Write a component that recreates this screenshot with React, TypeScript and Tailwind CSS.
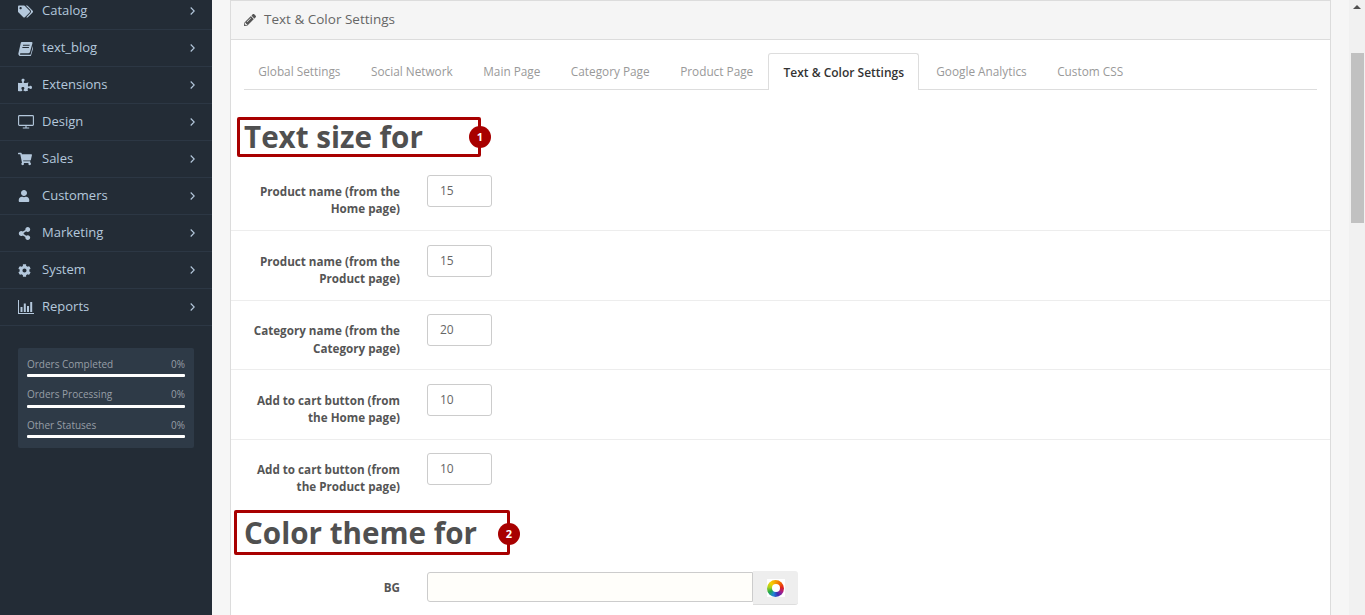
import React from 'react';
import { FaTags, FaPuzzlePiece, FaShoppingCart, FaUser, FaShareAlt, FaCog, FaPencilAlt } from 'react-icons/fa';

const IconBook = () => (
  <svg viewBox="0 0 16 16" className="w-[15px] h-[15px]" fill="currentColor">
    <path d="M4.2 1h10.3c.8 0 1.1.6.9 1.3l-2.6 9.4c-.2.7-.8 1.3-1.6 1.3H3c-.7 0-1 .5-.9 1 .1.4.5.7 1 .7h9.600c.4 0 .7-.3.800-.6l2.400-8.600c.5.200.7.700.5 1.300l-2.500 8.700c-.2.700-.9 1.200-1.600 1.200H2.800C1.500 16 .4 14.900.4 13.500c0-.3 0-.5.100-.7L2.900 2.500C3 1.700 3.500 1 4.200 1zm1.300 3l-.3 1h7l.3-1h-7zm-.7 2.500l-.3 1h7l.3-1h-7z" />
  </svg>
);

const IconDesktop = () => (
  <svg viewBox="0 0 16 14" className="w-[16px] h-[14px]" fill="none" stroke="currentColor" strokeWidth="1.1">
    <rect x="0.6" y="0.6" width="14.800" height="9.800" rx="0.8" />
    <path d="M8 10.500v2.400M4.800 13h6.400" />
  </svg>
);

const IconChart = () => (
  <svg viewBox="0 0 16 14" className="w-[16px] h-[14px]" fill="currentColor">
    <path d="M0 0h1v13h15v1H0z" />
    <path d="M2.500 7h2v5h-2zM5.800 3.500h2V12h-2zM9 6h2v6H9zM12.200 2h2v10h-2z" />
  </svg>
);

const IconAngle = () => (
  <svg viewBox="0 0 5 8" className="h-[8px] w-[5px]" fill="none" stroke="currentColor" strokeWidth="1.1">
    <path d="M0.700 0.500L4.200 4 0.700 7.500" />
  </svg>
);

const menu = [
  { label: 'Catalog', icon: <FaTags size={15} /> },
  { label: 'text_blog', icon: <IconBook /> },
  { label: 'Extensions', icon: <FaPuzzlePiece size={14} /> },
  { label: 'Design', icon: <IconDesktop /> },
  { label: 'Sales', icon: <FaShoppingCart size={14} /> },
  { label: 'Customers', icon: <FaUser size={12} /> },
  { label: 'Marketing', icon: <FaShareAlt size={13} /> },
  { label: 'System', icon: <FaCog size={13} /> },
  { label: 'Reports', icon: <IconChart /> },
];

const stats = ['Orders Completed', 'Orders Processing', 'Other Statuses'];

const tabs = [
  'Global Settings',
  'Social Network',
  'Main Page',
  'Category Page',
  'Product Page',
  'Text & Color Settings',
  'Google Analytics',
  'Custom CSS',
];

const sizes = [
  { line1: 'Product name (from the', line2: 'Home page)', value: '15' },
  { line1: 'Product name (from the', line2: 'Product page)', value: '15' },
  { line1: 'Category name (from the', line2: 'Category page)', value: '20' },
  { line1: 'Add to cart button (from', line2: 'the Home page)', value: '10' },
  { line1: 'Add to cart button (from', line2: 'the Product page)', value: '10' },
];

const Badge = ({ n, top }: { n: number; top: string }) => (
  <span className={`absolute right-[-13px] flex h-[22px] w-[22px] items-center justify-center rounded-full bg-[#a80000] text-[11px] font-bold text-white ${top}`}>
    {n}
  </span>
);

export default function App() {
  return (
    <div className="flex h-[615px] w-[1365px] overflow-hidden bg-[#f6f6f6] font-['Open_Sans',sans-serif] text-[12px] text-[#666]">
      {/* sidebar */}
      <aside className="h-full w-[212px] shrink-0 bg-[#232c36]">
        <ul className="mt-[-7px]">
          {menu.map((m) => (
            <li
              key={m.label}
              className="flex h-[37px] items-center border-b border-[#2c3744] pl-[18px] pr-[17px] text-[13px] text-[#b4c8dc]"
            >
              <span className="flex w-[24px] shrink-0 items-center">{m.icon}</span>
              <span className="flex-1">{m.label}</span>
              <IconAngle />
            </li>
          ))}
        </ul>
        <div className="ml-[18px] mt-[22px] h-[100px] w-[176px] rounded-[2px] bg-[#2e3a47] px-[9px] pt-[8px]">
          {stats.map((s) => (
            <div key={s} className="mb-[9.5px] last:mb-0">
              <div className="flex h-[16px] items-center justify-between text-[10px] text-[#979ea6]">
                <span>{s}</span>
                <span>0%</span>
              </div>
              <div className="mt-[2px] h-[3px] rounded-[1px] bg-white" />
            </div>
          ))}
        </div>
      </aside>

      {/* content */}
      <main className="ml-[18px] mr-[18px] h-full w-[1101px] shrink-0">
        <div className="h-full border-x border-t border-[#dcdcdc] bg-white">
          <div className="flex h-[39px] items-center border-b border-[#dcdcdc] bg-[#f5f5f5] pl-[13px] text-[13.5px] text-[#666]">
            <FaPencilAlt size={12} className="mr-[8px] text-[#555]" />
            <span className="mb-[2px]">Text &amp; Color Settings</span>
          </div>
          <div className="px-[13px] pt-[13px]">
            <ul className="flex h-[37px] w-[1073px] border-b border-[#ddd]">
              {tabs.map((t) =>
                t === 'Text & Color Settings' ? (
                  <li
                    key={t}
                    className="mb-[-1px] mr-[2px] flex h-[37px] items-center rounded-t-[3px] border border-b-0 border-[#ddd] bg-white px-[14px] pt-[1px] font-semibold text-[#333]"
                  >
                    {t}
                  </li>
                ) : (
                  <li key={t} className="flex h-[36px] items-center px-[15.25px] pt-[1px] text-[11.8px] text-[#999] first:pl-[14.25px]">
                    {t}
                  </li>
                ),
              )}
            </ul>
          </div>

          <div className="relative ml-[6px] mt-[27px] flex h-[40px] w-[244px] items-center rounded-[2px] border-[3px] border-[#a80000] pl-[4px]">
            <h2 className="text-[29.6px] font-bold leading-none text-[#505050]">Text size for</h2>
            <Badge n={1} top="top-[6px]" />
          </div>

          <div className="mt-[4px]">
            {sizes.map((r, i) => (
              <div
                key={i}
                className="flex h-[69.43px] border-t border-[#ededed] pt-[13.6px] first:border-t-transparent first:pt-[13px]"
              >
                <div className="w-[169px] shrink-0 pt-[8px] text-right text-[11.67px] font-bold leading-[17.14px] text-[#555]">
                  <div>{r.line1}</div>
                  <div>{r.line2}</div>
                </div>
                <div className="ml-[27px] flex h-[32px] w-[65px] items-center rounded-[3px] border border-[#ccc] bg-white pl-[12px] text-[#666]">
                  {r.value}
                </div>
              </div>
            ))}
          </div>

          <div className="relative ml-[3px] mt-[1.85px] flex h-[45px] w-[276px] items-center rounded-[2px] border-[3px] border-[#a80000] pl-[7px]">
            <h2 className="text-[29.6px] font-bold leading-none text-[#505050]">Color theme for</h2>
            <Badge n={2} top="top-[10px]" />
          </div>

          <div className="mt-[16px] flex h-[34px] items-start">
            <div className="w-[169px] shrink-0 pt-[8px] text-right text-[11.67px] font-bold leading-[17.14px] text-[#555]">BG</div>
            <div className="ml-[27px] mt-[1px] h-[30px] w-[326px] rounded-l-[3px] border border-[#ccc] bg-[#fffefa]" />
            <div className="flex h-[34px] w-[45px] items-center justify-center rounded-r-[3px] border-b border-[#ddd] bg-[#eee] pt-[2px]">
              <div className="flex h-[18px] w-[18px] items-center justify-center bg-white">
                <div className="flex h-[17px] w-[17px] items-center justify-center rounded-full bg-[conic-gradient(#f5a000,#f06a00,#e2231a,#a41e8c,#3a2fb5,#1e88d8,#22a84a,#a8d020,#f5d000,#f5a000)]">
                  <div className="h-[8px] w-[8px] rounded-full bg-white" />
                </div>
              </div>
            </div>
          </div>
        </div>
      </main>

      {/* scrollbar */}
      <div className="flex h-full w-[16px] shrink-0 flex-col items-center bg-[#f1f1f1]">
        <svg viewBox="0 0 8 4" className="mt-[5px] h-[4px] w-[8px]" fill="#505050">
          <path d="M4 0l4 4H0z" />
        </svg>
        <div className="ml-[1px] mt-[44px] h-[170px] w-[13px] bg-[#c1c1c1]" />
      </div>
    </div>
  );
}
